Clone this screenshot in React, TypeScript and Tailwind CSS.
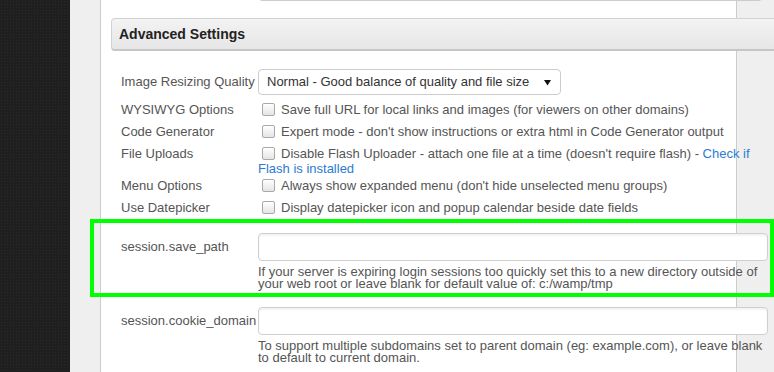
import React from "react";

function Checkbox() {
  return (
    <span className="inline-block align-middle w-[13px] h-[13px] ml-[4px] mr-[6px] -mt-[2px] rounded-[2px] border border-[#a9a9a9] bg-gradient-to-b from-white to-[#e4e4e4]" />
  );
}

function CheckRow({ label, children }: { label: string; children: React.ReactNode }) {
  return (
    <div className="flex">
      <div className="w-[137px] shrink-0 leading-[22px]">{label}</div>
      <div className="leading-[22px] whitespace-nowrap">{children}</div>
    </div>
  );
}

function TextRow({ label, help }: { label: string; help: string[] }) {
  return (
    <div className="flex mb-[17px]">
      <div className="w-[137px] shrink-0 leading-[28px] whitespace-nowrap">{label}</div>
      <div className="shrink-0">
        <div className="w-[510px] h-[28px] rounded-[4px] border border-[#cfcfcf] bg-white shadow-[inset_0_2px_2px_rgba(0,0,0,0.05)]" />
        <div className="mt-[5px] leading-[12px] whitespace-nowrap">
          {help.map((line) => (
            <div key={line}>{line}</div>
          ))}
        </div>
      </div>
    </div>
  );
}

export default function App() {
  return (
    <div
      className="relative flex w-[774px] h-[372px] overflow-hidden bg-[#efefef] text-[13px] text-[#555]"
      style={{ fontFamily: '"Liberation Sans", Arial, sans-serif' }}
    >
      {/* dark page edge */}
      <div className="w-[70px] shrink-0 bg-[#1f1f1f] bg-[radial-gradient(#2a2a2a_1px,transparent_1px)] bg-[length:3px_3px]" />

      <div className="w-[30px] shrink-0" />

      {/* settings panel */}
      <div className="w-[637px] shrink-0 flex flex-col bg-white border-x border-[#cccccc]">
        <div className="ml-[157px] w-[505px] h-[20px] -mt-[19px] shrink-0 rounded-[4px] border border-[#cccccc]" />

        <div className="ml-[10px] mt-[17px] w-[700px] h-[33px] shrink-0 flex items-center pl-[7px] rounded-l-[4px] border border-[#d2d2d2] border-b-2 border-b-[#c6c6c6] bg-gradient-to-b from-[#f3f3f3] to-[#e6e6e6]">
          <span className="text-[14px] font-bold text-[#222]">Advanced Settings</span>
        </div>

        <div className="pl-[20px] mt-[18px]">
          <div className="flex">
            <div className="w-[137px] shrink-0 leading-[26px]">Image Resizing Quality</div>
            <div className="w-[303px] h-[26px] shrink-0 flex items-center justify-between pl-[8px] pr-[9px] rounded-[4px] border border-[#cccccc] text-[#333]">
              <span>Normal - Good balance of quality and file size</span>
              <svg width="7" height="7" viewBox="0 0 7 7">
                <path d="M0 1 H7 L3.5 6.5 Z" fill="#111" />
              </svg>
            </div>
          </div>

          <div className="mt-[4px]">
            <CheckRow label="WYSIWYG Options">
              <Checkbox />
              Save full URL for local links and images (for viewers on other domains)
            </CheckRow>
            <CheckRow label="Code Generator">
              <Checkbox />
              Expert mode - don't show instructions or extra html in Code Generator output
            </CheckRow>
            <div className="flex">
              <div className="w-[137px] shrink-0 leading-[22px]">File Uploads</div>
              <div className="whitespace-nowrap">
                <div className="leading-[22px]">
                  <Checkbox />
                  Disable Flash Uploader - attach one file at a time (doesn't require flash) -{" "}
                  <span className="text-[#2b7bd3]">Check if</span>
                </div>
                <div className="leading-[12px] -mt-[2px] text-[#2b7bd3]">Flash is installed</div>
              </div>
            </div>
            <CheckRow label="Menu Options">
              <Checkbox />
              Always show expanded menu (don't hide unselected menu groups)
            </CheckRow>
            <CheckRow label="Use Datepicker">
              <Checkbox />
              Display datepicker icon and popup calendar beside date fields
            </CheckRow>
          </div>

          <div className="mt-[14px]">
            <TextRow
              label="session.save_path"
              help={[
                "If your server is expiring login sessions too quickly set this to a new directory outside of",
                "your web root or leave blank for default value of: c:/wamp/tmp",
              ]}
            />
            <TextRow
              label="session.cookie_domain"
              help={[
                "To support multiple subdomains set to parent domain (eg: example.com), or leave blank",
                "to default to current domain.",
              ]}
            />
          </div>
        </div>
      </div>

      {/* highlight annotation */}
      <div className="absolute left-[90px] top-[219px] w-[684px] h-[78px] border-4 border-[#00ff00] pointer-events-none" />
    </div>
  );
}
